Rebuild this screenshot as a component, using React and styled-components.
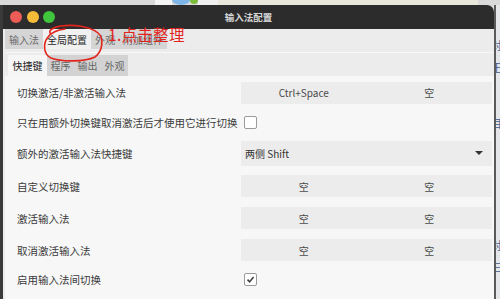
import styled, { createGlobalStyle } from "styled-components";

const GlobalStyle = createGlobalStyle`
  html, body {
    margin: 0;
    padding: 0;
    background: #dcdcdc;
    overflow: hidden;
  }
  body {
    font-family: "Noto Sans CJK SC", "Noto Sans", sans-serif;
  }
`;

const Screen = styled.div`
  width: 500px;
  height: 299px;
  display: flex;
  flex-direction: column;
  overflow: hidden;
  background: #dcdcdc;
`;

const TopStrip = styled.div`
  height: 5px;
  display: flex;
  align-items: flex-start;
  overflow: hidden;
`;

const DeskPatch = styled.div`
  width: ${(p) => p.w}px;
  height: ${(p) => p.h || 5}px;
  background: ${(p) => p.bg};
  border-radius: ${(p) => (p.round ? "50%" : "0")};
  margin-top: ${(p) => p.top || 0}px;
  flex-shrink: 0;
`;

const Main = styled.div`
  flex: 1;
  display: flex;
  min-height: 0;
`;

const Window = styled.div`
  position: relative;
  width: 491px;
  border-left: 3px solid #3a3a3a;
  border-top-right-radius: 7px;
  background: #ececec;
  display: flex;
  flex-direction: column;
  overflow: hidden;
`;

const TitleBar = styled.div`
  position: relative;
  height: 24px;
  background: #2c2c2c;
  display: flex;
  align-items: center;
  padding-left: 7px;
  gap: 4.5px;
  flex-shrink: 0;
`;

const Light = styled.span`
  width: 12px;
  height: 12px;
  border-radius: 50%;
  background: ${(p) => p.color};
`;

const Title = styled.div`
  position: absolute;
  left: 0;
  right: 0;
  text-align: center;
  color: #d8d8d8;
  font-size: 9.5px;
  font-weight: 700;
`;

const TabBar = styled.div`
  height: 20px;
  display: flex;
  padding-left: 2px;
  flex-shrink: 0;
`;

const Tab = styled.div`
  padding: 0 4px;
  display: flex;
  align-items: center;
  font-size: 10px;
  color: ${(p) => (p.active ? "#2a2a2a" : "#6a6a6a")};
  background: ${(p) => (p.active ? "#f1f1f1" : "#d5d5d5")};
`;

const Pane = styled.div`
  flex: 1;
  margin: 3px 0 0 2px;
  border-top: 1px solid #f8f8f8;
  display: flex;
  flex-direction: column;
`;

const SubTabBar = styled.div`
  height: 21px;
  margin-top: 2px;
  display: flex;
  padding-left: 3px;
  flex-shrink: 0;
`;

const SubTab = styled.div`
  padding: 0 ${(p) => (p.active ? "4.5px" : "3.5px")};
  display: flex;
  align-items: center;
  font-size: 10px;
  color: ${(p) => (p.active ? "#222" : "#666")};
  background: ${(p) => (p.active ? "#f6f6f6" : "#d3d3d3")};
`;

const Form = styled.div`
  flex: 1;
  background: #f7f7f7;
  padding: 0 2px 0 12px;
  display: flex;
  flex-direction: column;
`;

const Row = styled.div`
  height: ${(p) => p.h}px;
  display: flex;
  align-items: center;
  flex-shrink: 0;
`;

const Label = styled.div`
  flex: 1;
  font-size: 10.5px;
  color: #3a3a3a;
  white-space: nowrap;
`;

const Control = styled.div`
  width: 251px;
  display: flex;
  align-items: center;
`;

const KeyButton = styled.div`
  flex: 1;
  height: 22px;
  display: flex;
  align-items: center;
  justify-content: center;
  background: #ececec;
  font-size: 10px;
  color: #4a4a4a;
`;

const Combo = styled.div`
  flex: 1;
  height: 25px;
  display: flex;
  align-items: center;
  justify-content: space-between;
  padding: 0 9px 0 4px;
  background: #ececec;
  font-size: 10px;
  color: #333;
`;

const Arrow = styled.span`
  width: 0;
  height: 0;
  border-left: 4px solid transparent;
  border-right: 4px solid transparent;
  border-top: 4px solid #333;
`;

const Check = styled.div`
  width: 11px;
  height: 11px;
  margin-left: 3px;
  border: 1px solid #9a9a9a;
  border-radius: 2px;
  background: #fff;
  display: flex;
  align-items: center;
  justify-content: center;
`;

const Side = styled.div`
  flex: 1;
  border-left: 2px solid #5a5a5a;
  background: #e4e6ea;
  display: flex;
  flex-direction: column;
  overflow: hidden;
  padding-top: 34px;
  gap: 10px;
`;

const SideGlyph = styled.span`
  font-size: 11px;
  line-height: 12px;
  color: #3d5c8c;
  margin-left: -5px;
  margin-bottom: ${(p) => p.mb || 0}px;
`;

const Note = styled.div`
  position: absolute;
  left: 105px;
  top: 20px;
  font-size: 15.5px;
  line-height: 18px;
  color: #e3241c;
  letter-spacing: 0.3px;
`;

const Scribble = styled.svg`
  position: absolute;
  left: 36px;
  top: 15px;
`;

function Keys({ a, b }) {
  return (
    <Control>
      <KeyButton>{a}</KeyButton>
      <KeyButton>{b}</KeyButton>
    </Control>
  );
}

export default function App() {
  return (
    <>
      <GlobalStyle />
      <Screen>
        <TopStrip>
          <DeskPatch w={155} bg="#d9d9d9" />
          <DeskPatch w={17} bg="#f4f4f4" />
          <DeskPatch w={18} h={10} top={-5} round bg="#7fb6e8" />
          <DeskPatch w={8} h={8} top={-4} round bg="#7cbd3b" />
          <DeskPatch w={20} bg="#f0f0f0" />
          <DeskPatch w={260} bg="#e9e6dc" />
          <DeskPatch w={22} bg="#d9d9d9" />
        </TopStrip>
        <Main>
          <Window>
            <TitleBar>
              <Light color="#ec5b55" />
              <Light color="#f5bc3a" />
              <Light color="#3fc63c" />
              <Title>输入法配置</Title>
            </TitleBar>
            <TabBar>
              <Tab>输入法</Tab>
              <Tab active>全局配置</Tab>
              <Tab>外观</Tab>
              <Tab>附加组件</Tab>
            </TabBar>
            <Pane>
              <SubTabBar>
                <SubTab active>快捷键</SubTab>
                <SubTab>程序</SubTab>
                <SubTab>输出</SubTab>
                <SubTab>外观</SubTab>
              </SubTabBar>
              <Form>
                <Row h={33}>
                  <Label>切换激活/非激活输入法</Label>
                  <Keys a="Ctrl+Space" b="空" />
                </Row>
                <Row h={27}>
                  <Label>只在用额外切换键取消激活后才使用它进行切换</Label>
                  <Control>
                    <Check />
                  </Control>
                </Row>
                <Row h={34}>
                  <Label>额外的激活输入法快捷键</Label>
                  <Control>
                    <Combo>
                      <span>两侧 Shift</span>
                      <Arrow />
                    </Combo>
                  </Control>
                </Row>
                <Row h={32}>
                  <Label>自定义切换键</Label>
                  <Keys a="空" b="空" />
                </Row>
                <Row h={32}>
                  <Label>激活输入法</Label>
                  <Keys a="空" b="空" />
                </Row>
                <Row h={32}>
                  <Label>取消激活输入法</Label>
                  <Keys a="空" b="空" />
                </Row>
                <Row h={27}>
                  <Label>启用输入法间切换</Label>
                  <Control>
                    <Check>
                      <svg width="9" height="9" viewBox="0 0 9 9">
                        <path d="M1.5 4.6 L3.6 6.8 L7.6 2" fill="none" stroke="#444" strokeWidth="1.6" />
                      </svg>
                    </Check>
                  </Control>
                </Row>
              </Form>
            </Pane>
            <Scribble width="70" height="42" viewBox="0 0 70 42">
              <path
                d="M12 14 C8 11 14 7 22 6 C36 4 52 7 59 13 C65 18 64 31 56 37 C46 42 22 42 12 38 C4 34 4 23 9 17 C12 13 18 10 26 9"
                fill="none"
                stroke="#e3241c"
                strokeWidth="1.6"
                strokeLinecap="round"
              />
            </Scribble>
            <Note>1.点击整理</Note>
          </Window>
          <Side>
            <SideGlyph>对</SideGlyph>
            <SideGlyph mb={34}>王</SideGlyph>
            <SideGlyph mb={100}>目</SideGlyph>
            <SideGlyph>对</SideGlyph>
            <SideGlyph>三</SideGlyph>
          </Side>
        </Main>
      </Screen>
    </>
  );
}
